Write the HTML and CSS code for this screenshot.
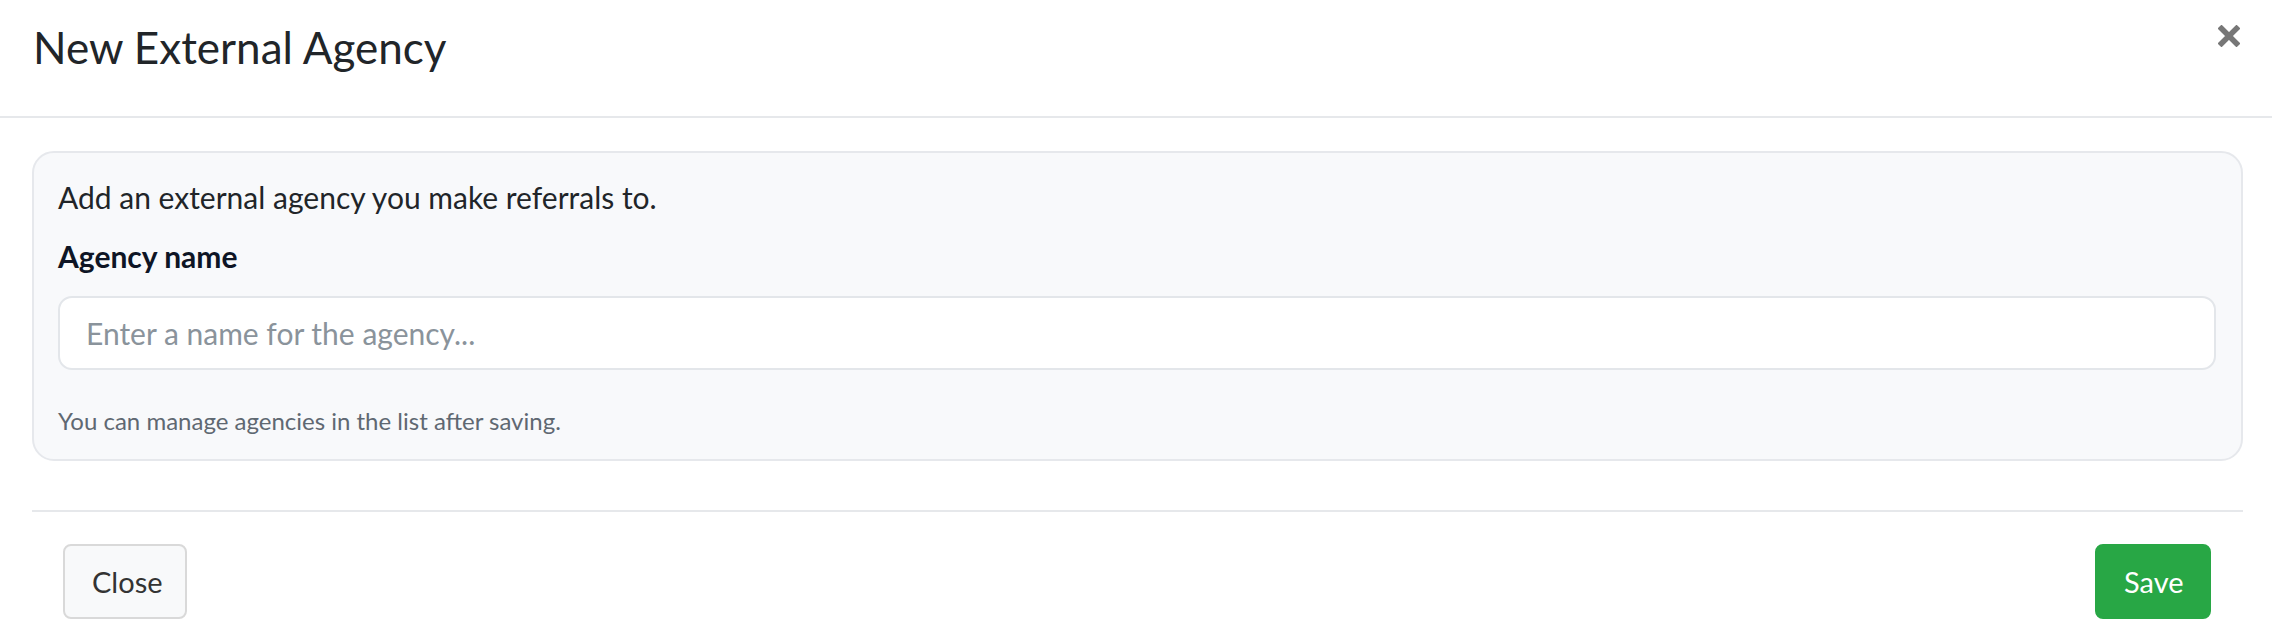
FILE: index.html
```html
<!DOCTYPE html>
<html lang="en">
<head>
<meta charset="utf-8">
<title>New External Agency</title>
<link rel="stylesheet" href="styles.css">
</head>
<body>
<div class="modal">
  <header class="modal-header">
    <h1 class="modal-title">New External Agency</h1>
    <button class="btn-x" type="button" aria-label="Close">
      <svg viewBox="0 0 22 22" width="22" height="22" aria-hidden="true">
        <path d="M3.5 3.5 L18.5 18.5 M18.5 3.5 L3.5 18.5" stroke="#777" stroke-width="5.5" stroke-linecap="square" fill="none"/>
      </svg>
    </button>
  </header>
  <main class="modal-body">
    <section class="card">
      <p class="intro">Add an external agency you make referrals to.</p>
      <label class="field-label" for="agency">Agency name</label>
      <input class="field-input" id="agency" type="text" placeholder="Enter a name for the agency...">
      <p class="help">You can manage agencies in the list after saving.</p>
    </section>
    <footer class="modal-footer">
      <button class="btn btn-light" type="button">Close</button>
      <button class="btn btn-success" type="button">Save</button>
    </footer>
  </main>
</div>
</body>
</html>
```
FILE: styles.css
```css
* { box-sizing: border-box; }
html, body { margin: 0; padding: 0; background: #fff; }
body {
  font-family: Lato, "Noto Sans", sans-serif;
  color: #212529;
}
.modal { width: 2272px; height: 634px; overflow: hidden; }
.modal-header {
  display: flex;
  justify-content: space-between;
  align-items: flex-start;
  height: 118px;
  padding: 17px 32px 0 33px;
  border-bottom: 2px solid #e6e8eb;
}
.modal-title {
  margin: 0;
  font-size: 44px;
  font-weight: 400;
  line-height: 60px;
  color: #212529;
}
.btn-x {
  margin: 8px 0 0 0;
  padding: 0;
  border: 0;
  background: none;
  width: 22px;
  height: 22px;
  display: block;
}
.btn-x svg { display: block; }
.modal-body {
  padding: 33px 29px 0 32px;
}
.card {
  background: #f8f9fb;
  border: 2px solid #e6e8ec;
  border-radius: 22px;
  padding: 24px 25px 0 24px;
  height: 310px;
}
.intro {
  margin: 0;
  font-size: 30px;
  line-height: 40px;
  color: #212529;
}
.field-label {
  display: block;
  margin-top: 19px;
  font-size: 30px;
  font-weight: 700;
  line-height: 40px;
  color: #0e1525;
}
.field-input {
  display: block;
  width: 100%;
  height: 74px;
  margin-top: 20px;
  padding: 0 26px;
  border: 2px solid #e3e6ea;
  border-radius: 14px;
  background: #fff;
  font-family: inherit;
  font-size: 30px;
  color: #212529;
  outline: none;
}
.field-input::placeholder { color: #8a939b; opacity: 1; }
.help {
  margin: 35px 0 0;
  font-size: 24px;
  line-height: 32px;
  color: #5f6872;
}
.modal-footer {
  margin-top: 49px;
  border-top: 2px solid #e6e8eb;
  padding: 32px 32px 0 31px;
  display: flex;
  justify-content: space-between;
}
.btn {
  height: 75px;
  border-radius: 8px;
  font-family: inherit;
  font-size: 29px;
  line-height: 1;
  padding: 0 27px;
  cursor: pointer;
}
.btn-light {
  width: 124px;
  background: #f8f9fa;
  border: 2px solid #d9d9d9;
  color: #333;
}
.btn-success {
  width: 116px;
  background: #28a745;
  border: 2px solid #28a745;
  color: #fff;
}
```
